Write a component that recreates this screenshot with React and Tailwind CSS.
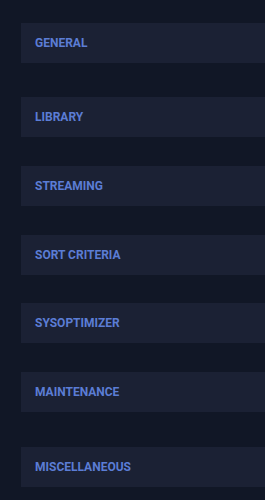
export default function App() {
  const items = [
    { label: "GENERAL", mt: "mt-[23px]" },
    { label: "LIBRARY", mt: "mt-[34px]" },
    { label: "STREAMING", mt: "mt-[29px]" },
    { label: "SORT CRITERIA", mt: "mt-[29px]" },
    { label: "SYSOPTIMIZER", mt: "mt-[28px]" },
    { label: "MAINTENANCE", mt: "mt-[29px]" },
    { label: "MISCELLANEOUS", mt: "mt-[35px]" },
  ];
  return (
    <div
      className="w-[265px] h-[500px] overflow-hidden bg-[#111726] pl-[21px] flex flex-col"
      style={{ fontFamily: "Roboto, 'Noto Sans', sans-serif" }}
    >
      {items.map((it) => (
        <div
          key={it.label}
          className={`${it.mt} h-10 shrink-0 bg-[#1b2134] flex items-center pl-[14px]`}
        >
          <span className="text-[12px] font-bold text-[#5b7dd5] leading-none">
            {it.label}
          </span>
        </div>
      ))}
    </div>
  );
}
